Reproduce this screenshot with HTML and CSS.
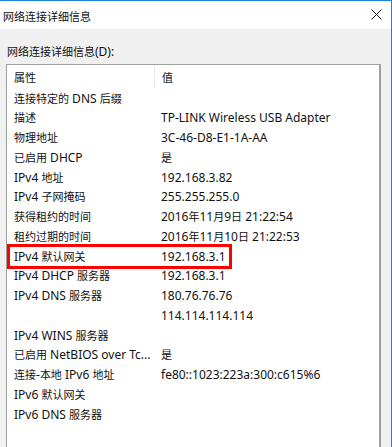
FILE: index.html
```html
<!DOCTYPE html>
<html lang="zh-CN">
<head>
    <meta charset="utf-8" />
    <title>网络连接详细信息</title>
    <meta name="viewport" content="width=device-width, initial-scale=1" />
    <link rel="stylesheet" href="styles.css">
</head>
<body>
<div class="window">
    <div class="titlebar">
        <span class="title zh">网络连接详细信息</span>
        <svg class="close" width="11" height="11" viewBox="0 0 11 11">
            <path d="M0.5 0.5 L10.5 10.5 M10.5 0.5 L0.5 10.5" stroke="#1a1a1a" stroke-width="1" fill="none" />
        </svg>
    </div>
    <div class="body">
        <div class="label"><span class="zh">网络连接详细信息</span>(D):</div>
        <div class="list">
            <div class="head">
                <div class="cell col1 zh">属性</div>
                <div class="cell zh">值</div>
            </div>
            <div class="row"><div class="cell"><span class="zh">连接特定的</span> DNS <span class="zh">后缀</span></div><div class="cell"></div></div>
            <div class="row"><div class="cell zh">描述</div><div class="cell">TP-LINK Wireless USB Adapter</div></div>
            <div class="row"><div class="cell zh">物理地址</div><div class="cell">3C-46-D8-E1-1A-AA</div></div>
            <div class="row"><div class="cell"><span class="zh">已启用</span> DHCP</div><div class="cell zh">是</div></div>
            <div class="row"><div class="cell">IPv4 <span class="zh">地址</span></div><div class="cell">192.168.3.82</div></div>
            <div class="row"><div class="cell">IPv4 <span class="zh">子网掩码</span></div><div class="cell">255.255.255.0</div></div>
            <div class="row"><div class="cell zh">获得租约的时间</div><div class="cell">2016<span class="zh">年</span>11<span class="zh">月</span>9<span class="zh">日</span> 21:22:54</div></div>
            <div class="row"><div class="cell zh">租约过期的时间</div><div class="cell">2016<span class="zh">年</span>11<span class="zh">月</span>10<span class="zh">日</span> 21:22:53</div></div>
            <div class="row"><div class="cell">IPv4 <span class="zh">默认网关</span></div><div class="cell">192.168.3.1</div><span class="mark"></span></div>
            <div class="row"><div class="cell">IPv4 DHCP <span class="zh">服务器</span></div><div class="cell">192.168.3.1</div></div>
            <div class="row"><div class="cell">IPv4 DNS <span class="zh">服务器</span></div><div class="cell">180.76.76.76</div></div>
            <div class="row"><div class="cell"></div><div class="cell">114.114.114.114</div></div>
            <div class="row"><div class="cell">IPv4 WINS <span class="zh">服务器</span></div><div class="cell"></div></div>
            <div class="row"><div class="cell"><span class="zh">已启用</span> NetBIOS over Tc...</div><div class="cell zh">是</div></div>
            <div class="row"><div class="cell"><span class="zh">连接</span>-<span class="zh">本地</span> IPv6 <span class="zh">地址</span></div><div class="cell">fe80::1023:223a:300:c615%6</div></div>
            <div class="row"><div class="cell">IPv6 <span class="zh">默认网关</span></div><div class="cell"></div></div>
            <div class="row"><div class="cell">IPv6 DNS <span class="zh">服务器</span></div><div class="cell"></div></div>
        </div>
    </div>
</div>
</body>
</html>
```

FILE: styles.css
```css
html, body {
    margin: 0; padding: 0; height: 100%; overflow: hidden;
}
body {
    font: 12px "Noto Sans", "Noto Sans CJK SC", sans-serif;
    color: #111;
}
.zh { font-family: "Noto Sans CJK SC", sans-serif; font-size: 11px; }
.window {
    width: 391px; height: 100%;
    border-top: 1px solid #1883d7; border-right: 1px solid #1883d7;
    background-color: #f0f0f0;
}
.titlebar {
    height: 28px; background-color: #fff;
    display: flex; align-items: center; justify-content: space-between;
    padding: 0 9px 0 3px;
}
.title { margin-top: 1px; }
.close { margin-top: -1px; }
.body { padding: 14px 0 0 6px; }
.label { margin-left: 1px; line-height: 16px; }
.list {
    margin-top: 4px; width: 372px; height: 400px;
    border: 1px solid #a0a0a0; border-right-width: 2px;
    background-color: #fff;
}
.head {
    display: grid; grid-template-columns: 148px 1fr;
    height: 23.5px; align-items: center;
}
.head .col1 { border-right: 1px solid #e5e5e5; height: 22px; line-height: 22px; }
.row {
    display: grid; grid-template-columns: 154px 1fr;
    height: 19.75px; line-height: 19.75px;
    position: relative;
}
.cell { padding-left: 7px; white-space: nowrap; }
.row .cell:last-of-type { padding-left: 0; }
.mark {
    position: absolute; left: 0; top: -3px;
    width: 219px; height: 19px;
    border: 3px solid #f00;
}
```
